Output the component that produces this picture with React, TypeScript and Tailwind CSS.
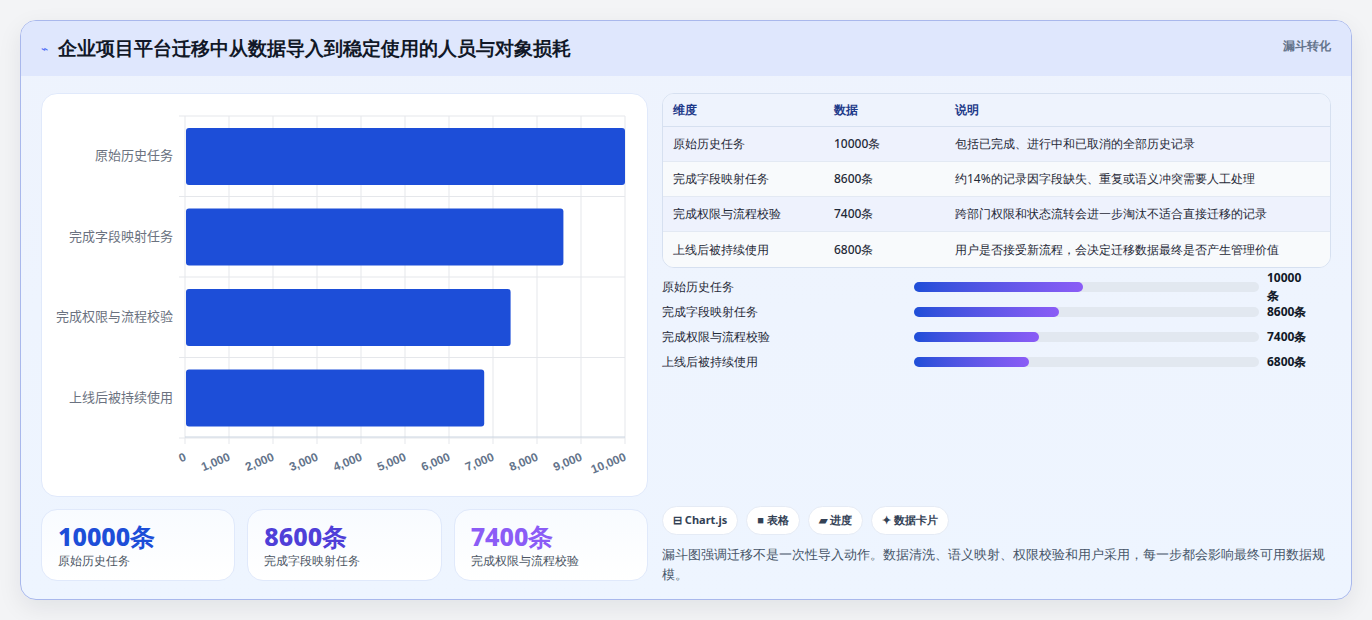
const font = "font-['Noto_Sans_CJK_SC','Noto_Sans',sans-serif]";

const rows = [
  { name: "原始历史任务", value: 10000, note: "包括已完成、进行中和已取消的全部历史记录" },
  { name: "完成字段映射任务", value: 8600, note: "约14%的记录因字段缺失、重复或语义冲突需要人工处理" },
  { name: "完成权限与流程校验", value: 7400, note: "跨部门权限和状态流转会进一步淘汰不适合直接迁移的记录" },
  { name: "上线后被持续使用", value: 6800, note: "用户是否接受新流程，会决定迁移数据最终是否产生管理价值" },
];

const BarChart = () => {
  const x0 = 143;
  const w = 440;
  const ticks = Array.from({ length: 11 }, (_, i) => i);
  return (
    <svg width="607" height="403" className="block">
      {ticks.map((i) => (
        <line key={i} x1={x0 + i * 44} x2={x0 + i * 44} y1={22} y2={350} stroke="#e5e7eb" />
      ))}
      {[0, 1, 2, 3, 4].map((i) => (
        <line key={i} x1={x0 - 6} x2={x0 + w} y1={22 + i * 80.5} y2={22 + i * 80.5} stroke="#e5e7eb" />
      ))}
      <line x1={x0} x2={x0 + w} y1={343} y2={343} stroke="#cbd5e1" />
      {rows.map((r, i) => (
        <g key={r.name}>
          <rect x={x0 + 1} y={34 + i * 80.5} width={(r.value / 10000) * w - 1} height={57} rx={3} fill="#1d4ed8" />
          <text x={x0 - 12} y={66 + i * 80.5} textAnchor="end" fontSize="13" fill="#6b7280" fontFamily="Noto Sans CJK SC, sans-serif">
            {r.name}
          </text>
        </g>
      ))}
      {ticks.map((i) => (
        <text
          key={i}
          x={x0 + i * 44 + 2}
          y={366}
          textAnchor="end"
          fontSize="12"
          fontWeight="bold"
          fill="#64748b"
          fontFamily="Liberation Sans, sans-serif"
          transform={`rotate(-22 ${x0 + i * 44 + 2} ${366})`}
        >
          {(i * 1000).toLocaleString("en-US")}
        </text>
      ))}
    </svg>
  );
};

const StatCard = ({ value, label, color }: { value: string; label: string; color: string }) => (
  <div className="flex-1 h-[72px] rounded-2xl border border-[#e0e9fb] bg-gradient-to-b from-[#f8fbff] to-white px-4 py-2.5">
    <div className={`text-[25px] leading-[32px] font-extrabold ${color}`}>{value}</div>
    <div className="text-[12px] leading-[18px] text-[#4b5563] font-medium">{label}</div>
  </div>
);

export default function App() {
  return (
    <div className={`w-[1372px] h-[620px] bg-[#f3f4f6] pt-5 px-5 ${font}`}>
      <div className="w-[1332px] h-[580px] rounded-2xl border border-[#a9b8ec] bg-gradient-to-b from-[#eef3fd] to-[#eef5ff] overflow-hidden shadow-[0_8px_24px_rgba(15,23,42,0.08)]">
        <div className="h-[55px] bg-[#dfe7fd] flex items-center justify-between px-5">
          <div className="flex items-center gap-2.5">
            <span className="text-[#4f6ef7] text-[12px]">⌁</span>
            <h1 className="text-[19px] font-bold text-[#111827]">企业项目平台迁移中从数据导入到稳定使用的人员与对象损耗</h1>
          </div>
          <span className="text-[12px] font-bold text-[#64748b] self-start mt-4">漏斗转化</span>
        </div>
        <div className="flex gap-[14px] px-5 pt-[17px]">
          <div className="w-[607px] flex flex-col gap-3">
            <div className="h-[404px] rounded-2xl bg-white border border-[#e0e9fb]">
              <BarChart />
            </div>
            <div className="flex gap-3">
              <StatCard value="10000条" label="原始历史任务" color="text-[#1d4ed8]" />
              <StatCard value="8600条" label="完成字段映射任务" color="text-[#4f3fd8]" />
              <StatCard value="7400条" label="完成权限与流程校验" color="text-[#8b5cf6]" />
            </div>
          </div>
          <div className="w-[672px] flex flex-col">
            <div className="rounded-xl border border-[#d6e0f0] overflow-hidden bg-[#f5f8fd] text-[12px]">
              <div className="grid grid-cols-[161px_121px_1fr] h-[33px] items-center px-[10px] font-bold text-[#1e3a8a] border-b border-[#d6e0f0] bg-[#eef3fd]">
                <span>维度</span><span>数据</span><span>说明</span>
              </div>
              {rows.map((r, i) => (
                <div
                  key={r.name}
                  className={`grid grid-cols-[161px_121px_1fr] h-[35px] items-center px-[10px] text-[#1f2937] ${i % 2 === 0 ? "bg-[#eef2fd]" : "bg-[#f8fafc]"} ${i < 3 ? "border-b border-[#e3e9f3]" : ""}`}
                >
                  <span className="font-medium">{r.name}</span>
                  <span className="font-medium">{r.value}条</span>
                  <span>{r.note}</span>
                </div>
              ))}
            </div>
            <div className="flex flex-col gap-[11px] mt-3 pr-[22px]">
              {rows.map((r) => (
                <div key={r.name} className="flex items-center h-[14px] text-[12px]">
                  <span className="w-[252px] font-medium text-[#1f2937]">{r.name}</span>
                  <div className="flex-1 h-[10px] rounded-full bg-[#e2e8f0]">
                    <div
                      className="h-full rounded-full bg-gradient-to-r from-[#1d4ed8] to-[#8b5cf6]"
                      style={{ width: `${(r.value / 10000) * 49}%` }}
                    />
                  </div>
                  <span className="w-[50px] pl-2 font-bold text-[#111827]">{r.value}条</span>
                </div>
              ))}
            </div>
            <div className="flex gap-2 mt-[137px]">
              {["⊟ Chart.js", "■ 表格", "▰ 进度", "✦ 数据卡片"].map((t) => (
                <span key={t} className="h-[29px] px-2.5 flex items-center rounded-full bg-white border border-[#e5ebf5] text-[11px] font-bold text-[#334155]">
                  {t}
                </span>
              ))}
            </div>
            <p className="mt-2.5 text-[12.5px] leading-[20px] text-[#475569] font-medium">
              漏斗图强调迁移不是一次性导入动作。数据清洗、语义映射、权限校验和用户采用，每一步都会影响最终可用数据规模。
            </p>
          </div>
        </div>
      </div>
    </div>
  );
}
